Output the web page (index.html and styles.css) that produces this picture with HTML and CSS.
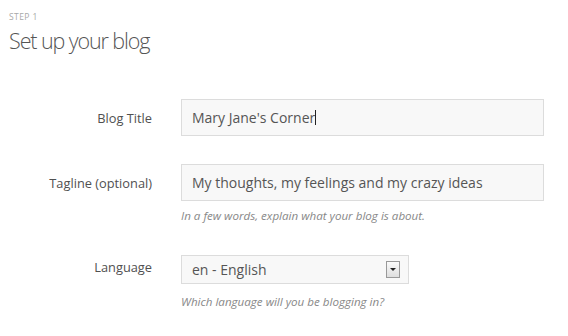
FILE: index.html
```html
<!DOCTYPE html>
<html lang="en">
<head>
    <meta charset="UTF-8">
    <meta name="viewport" content="width=device-width, initial-scale=1.0">
    <title>Set up your blog</title>
    <link rel="stylesheet" href="styles.css">
</head>
<body>
    <div class="page">
        <div class="step">Step 1</div>
        <h1>Set up your blog</h1>

        <form class="setup">
            <div class="field">
                <label class="field-label">Blog Title</label>
                <div class="field-control">
                    <div class="text-box">Mary Jane's Corner<span class="caret"></span></div>
                </div>
            </div>

            <div class="field">
                <label class="field-label">Tagline (optional)</label>
                <div class="field-control">
                    <div class="text-box">My thoughts, my feelings and my crazy ideas</div>
                    <p class="hint">In a few words, explain what your blog is about.</p>
                </div>
            </div>

            <div class="field field-language">
                <label class="field-label">Language</label>
                <div class="field-control">
                    <div class="select-box">
                        <span>en - English</span>
                        <span class="select-arrow"></span>
                    </div>
                    <p class="hint">Which language will you be blogging in?</p>
                </div>
            </div>
        </form>
    </div>
</body>
</html>
```

FILE: styles.css
```css
body {
    margin: 0;
    background-color: #ffffff;
    font-family: 'Open Sans', 'Noto Sans', sans-serif;
    color: #555;
}

.page {
    padding: 11px 8px 0 9px;
}

.step {
    font-size: 8.5px;
    line-height: 12px;
    text-transform: uppercase;
    color: #a8a8a8;
    letter-spacing: 0.4px;
}

h1 {
    margin: 4px 0 0;
    font-size: 21.5px;
    line-height: 28px;
    font-weight: 300;
    letter-spacing: -1.1px;
    color: #555;
}

.setup {
    margin-top: 44px;
}

.field {
    display: flex;
    align-items: flex-start;
    margin-bottom: 28px;
}

.field-language {
    margin-top: 32px;
}

.field-label {
    width: 143px;
    padding-top: 10px;
    text-align: right;
    font-size: 12.8px;
    line-height: 18px;
    color: #505050;
}

.field-language .field-label {
    padding-top: 3px;
}

.field-control {
    margin-left: 29px;
}

.text-box {
    box-sizing: border-box;
    width: 363px;
    height: 37px;
    padding: 0 10px;
    display: flex;
    align-items: center;
    background-color: #f8f8f8;
    border: 1px solid #dcdcdc;
    font-size: 14px;
    color: #555;
}

.caret {
    display: inline-block;
    width: 1px;
    height: 15px;
    background-color: #222;
}

.select-box {
    box-sizing: border-box;
    width: 228px;
    height: 29px;
    padding: 0 8px 0 10px;
    display: flex;
    align-items: center;
    justify-content: space-between;
    background-color: #f8f8f8;
    border: 1px solid #dcdcdc;
    font-size: 14px;
    color: #555;
}

.select-arrow {
    box-sizing: border-box;
    width: 14px;
    height: 17px;
    border: 1px solid #999;
    background: linear-gradient(#fafafa, #dedede);
    display: flex;
    align-items: center;
    justify-content: center;
}

.select-arrow::after {
    content: "";
    border-left: 3px solid transparent;
    border-right: 3px solid transparent;
    border-top: 3px solid #222;
}

.hint {
    margin: 7px 0 0;
    font-size: 11.6px;
    line-height: 15px;
    font-style: italic;
    color: #888;
}

.field-language .hint {
    margin-top: 10px;
}
```
